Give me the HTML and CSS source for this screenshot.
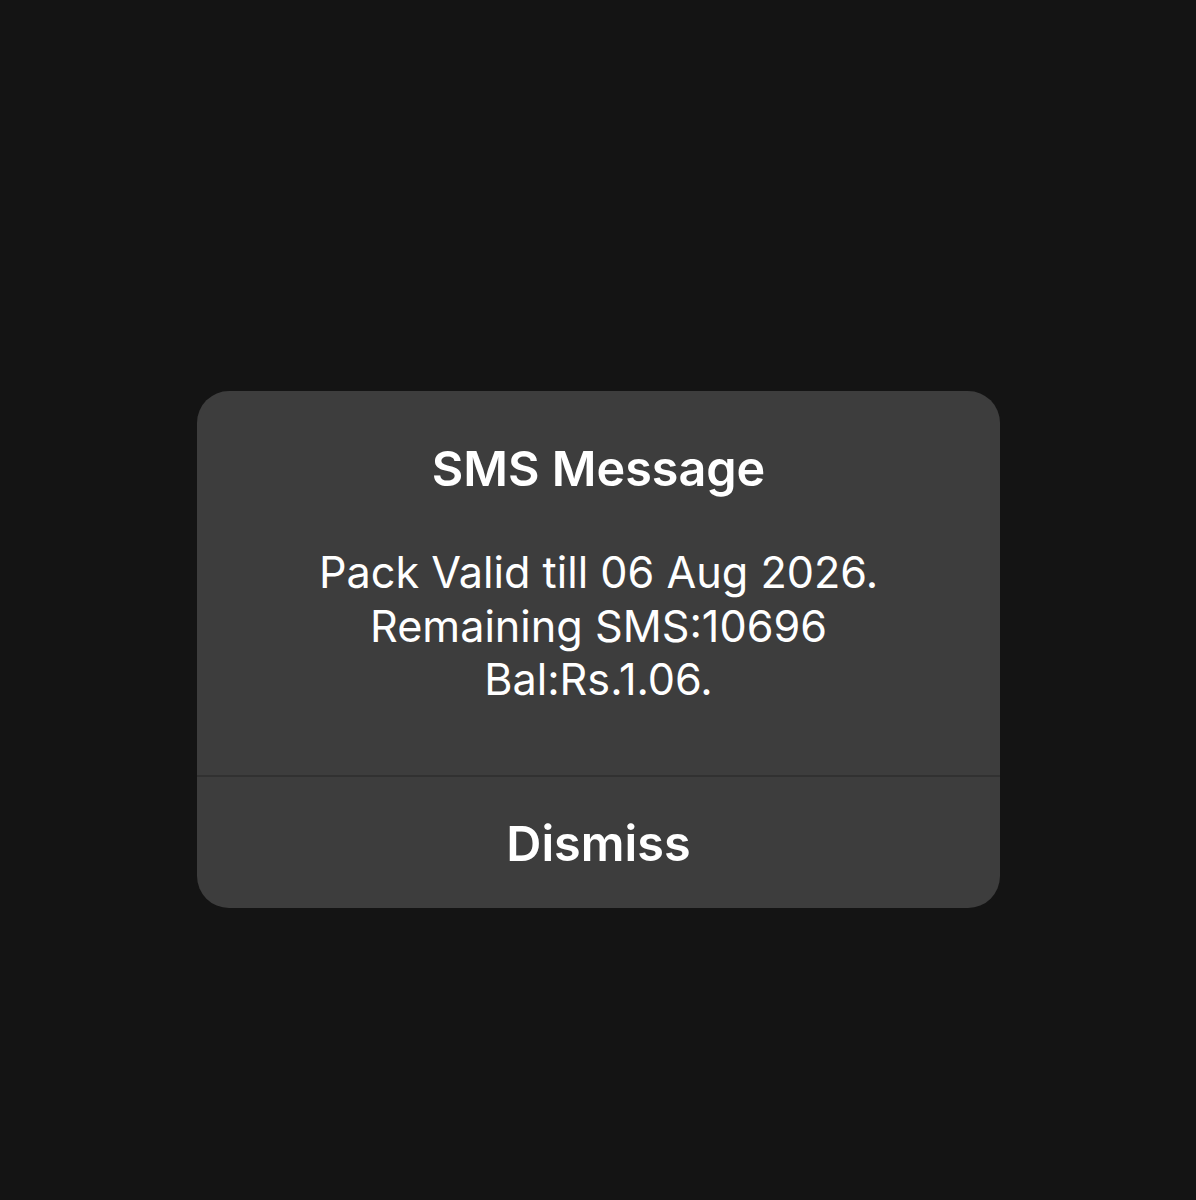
FILE: index.html
```html
<!DOCTYPE html>
<html>
<head>
<meta charset="utf-8">
<link rel="stylesheet" href="styles.css">
</head>
<body>
<div class="alert">
  <div class="content">
    <div class="title">SMS Message</div>
    <div class="message">Pack Valid till 06 Aug 2026.<br>Remaining SMS:10696<br>Bal:Rs.1.06.</div>
  </div>
  <div class="action">Dismiss</div>
</div>
</body>
</html>
```

FILE: styles.css
```css
html, body {
  margin: 0;
  padding: 0;
  background: #141414;
  height: 1200px;
}
body {
  padding-top: 391px;
  box-sizing: border-box;
  font-family: Inter, "Noto Sans", sans-serif;
  color: #ffffff;
}
.alert {
  margin-left: 197px;
  width: 803px;
  height: 517px;
  background: #3d3d3d;
  border-radius: 32px;
  display: flex;
  flex-direction: column;
  overflow: hidden;
}
.content {
  padding: 48px 30px 0;
  height: 386px;
  box-sizing: border-box;
  text-align: center;
  border-bottom: 2px solid #313131;
}
.title {
  font-size: 48.5px;
  font-weight: 600;
  line-height: 60px;
}
.message {
  margin-top: 47px;
  font-size: 43.2px;
  font-weight: 400;
  line-height: 53.5px;
}
.action {
  flex: 1;
  display: flex;
  align-items: center;
  justify-content: center;
  font-size: 48.6px;
  font-weight: 600;
  padding-top: 2px;
}
```
